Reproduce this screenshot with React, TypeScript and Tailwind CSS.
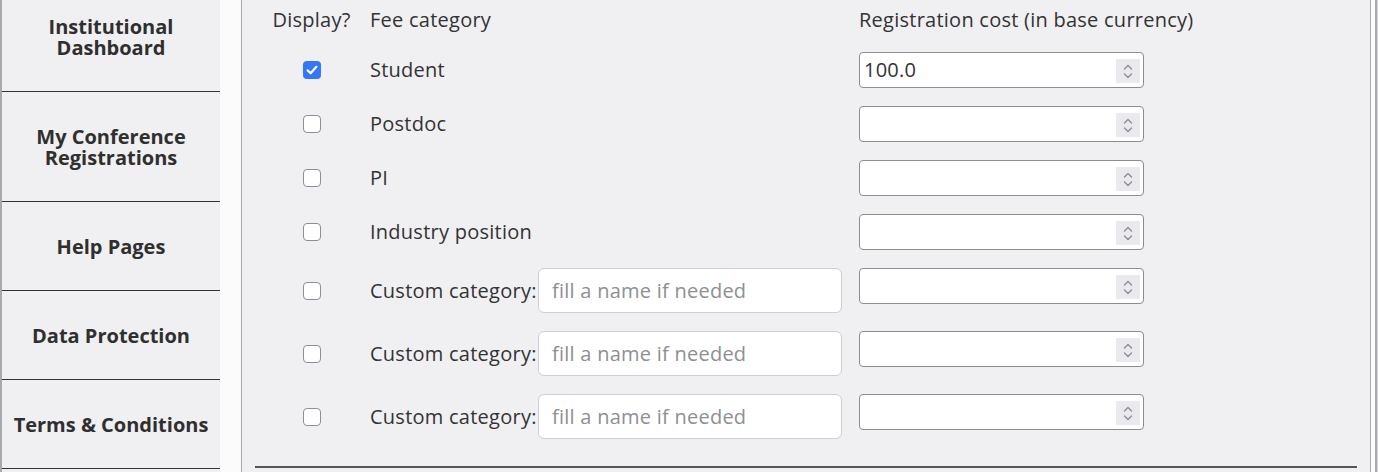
import React from 'react';

const font = { fontFamily: '"Open Sans", Lato, sans-serif' };

const navItems = [
  { label: 'Institutional Dashboard', h: 'h-[110px]', wrap: true },
  { label: 'My Conference Registrations', h: 'h-[110px]', wrap: true },
  { label: 'Help Pages', h: 'h-[89px]', wrap: false },
  { label: 'Data Protection', h: 'h-[89px]', wrap: false },
  { label: 'Terms & Conditions', h: 'h-[89px]', wrap: false },
];

const fixedRows = [
  { name: 'Student', checked: true, cost: '100.0' },
  { name: 'Postdoc', checked: false, cost: '' },
  { name: 'PI', checked: false, cost: '' },
  { name: 'Industry position', checked: false, cost: '' },
];

function Checkbox({ checked }: { checked: boolean }) {
  if (checked) {
    return (
      <span className="flex h-[18px] w-[18px] items-center justify-center rounded-[4px] bg-[#3478f6]">
        <svg width="14" height="14" viewBox="0 0 14 14" fill="none">
          <path d="M2.6 7.4 L5.6 10.3 L11.4 3.8" stroke="white" strokeWidth="2.2" strokeLinecap="round" strokeLinejoin="round" />
        </svg>
      </span>
    );
  }
  return <span className="block h-[18px] w-[18px] rounded-[4px] border border-[#8e8e96] bg-white" />;
}

function CostInput({ value }: { value: string }) {
  return (
    <div className="flex h-[36px] w-[285px] items-center rounded-[4px] border border-[#8c8c92] bg-white pl-1 pr-[3px]">
      <input
        className="min-w-0 flex-1 bg-transparent text-[20px] tracking-[0.25px] text-[#333] outline-none"
        defaultValue={value}
        style={font}
      />
      <span className="mt-[2px] flex h-[24px] w-[24px] flex-col items-center justify-center gap-[3px] bg-[#e9e9ee]">
        <svg width="10" height="6" viewBox="0 0 10 6" fill="none">
          <path d="M1.5 5 L5 1.5 L8.5 5" stroke="#8e8e96" strokeWidth="1.4" strokeLinecap="round" strokeLinejoin="round" />
        </svg>
        <svg width="10" height="6" viewBox="0 0 10 6" fill="none">
          <path d="M1.5 1 L5 4.5 L8.5 1" stroke="#8e8e96" strokeWidth="1.4" strokeLinecap="round" strokeLinejoin="round" />
        </svg>
      </span>
    </div>
  );
}

export default function App() {
  return (
    <div className="flex h-[472px] w-full overflow-hidden bg-[#fbfbfb] text-[#333]" style={font}>
      {/* sidebar */}
      <div className="w-[220px] shrink-0 border-l-2 border-[#a9a9ad] bg-[#f0f0f2]">
        <div className="-mt-[18px] flex flex-col">
          {navItems.map((item) => (
            <div
              key={item.label}
              className={`${item.h} flex items-center justify-center border-b border-[#333] text-center text-[20px] font-bold leading-[21px] text-[#2f2f2f]`}
            >
              <span className={item.wrap ? 'max-w-[165px]' : 'whitespace-nowrap'}>{item.label}</span>
            </div>
          ))}
        </div>
      </div>

      <div className="w-[21px] shrink-0" />

      {/* main panel */}
      <div className="flex flex-1 flex-col border-x border-[#a9a9ad] bg-[#f0f0f2]">
        <div className="flex flex-col pl-[29px] pt-2 text-[20px] tracking-[0.25px]">
          <div className="flex h-[24px] items-center leading-[24px]">
            <div className="w-[81px] whitespace-nowrap text-center">Display?</div>
            <div className="ml-[18px] w-[472px]">Fee category</div>
            <div className="ml-[17px] whitespace-nowrap">Registration cost (in base currency)</div>
          </div>

          <div className="mt-[20px] flex flex-col gap-[18px]">
            {fixedRows.map((r) => (
              <div key={r.name} className="flex h-[36px] items-center">
                <div className="flex w-[81px] justify-center">
                  <Checkbox checked={r.checked} />
                </div>
                <div className="ml-[18px] w-[472px]">{r.name}</div>
                <div className="ml-[17px]">
                  <CostInput value={r.cost} />
                </div>
              </div>
            ))}
            {[0, 1, 2].map((i) => (
              <div key={i} className="flex items-start">
                <div className="flex h-[45px] w-[81px] items-center justify-center">
                  <Checkbox checked={false} />
                </div>
                <div className="ml-[18px] flex h-[45px] w-[472px] items-center">
                  <span className="w-[168px] whitespace-nowrap">Custom category:</span>
                  <input
                    className="h-[45px] w-[304px] rounded-[6px] border border-[#cfcfd2] bg-white px-[13px] text-[20px] tracking-[0.25px] text-[#333] outline-none placeholder:text-[#8f8f93]"
                    placeholder="fill a name if needed"
                    style={font}
                  />
                </div>
                <div className="ml-[17px]">
                  <CostInput value="" />
                </div>
              </div>
            ))}
          </div>
        </div>
        <div className="mx-[13px] mt-auto mb-[4px] h-[2px] bg-[#555]" />
      </div>

      <div className="w-[4px] shrink-0" />
      <div className="w-[2px] shrink-0 bg-[#a9a9ad]" />
      <div className="w-[1px] shrink-0 bg-[#d8d8dc]" />
    </div>
  );
}
